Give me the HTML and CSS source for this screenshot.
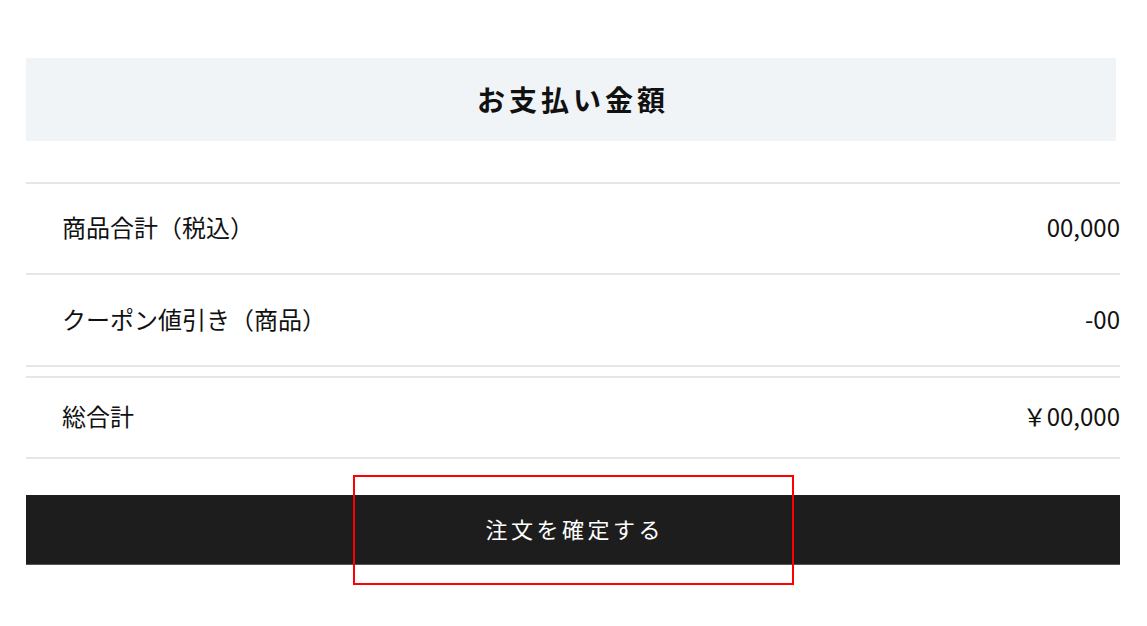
FILE: index.html
```html
<!DOCTYPE html>
<html lang="ja">
<head>
    <meta charset="UTF-8">
    <meta name="viewport" content="width=device-width, initial-scale=1.0">
    <title>お支払い金額</title>
    <link rel="stylesheet" href="styles.css">
</head>
<body>

    <div class="payment">
        <h2 class="payment-title">お支払い金額</h2>

        <div class="price-list">
            <div class="price-row first">
                <span class="label">商品合計（税込）</span>
                <span class="value">00,000</span>
            </div>
            <div class="price-row">
                <span class="label">クーポン値引き（商品）</span>
                <span class="value">-00</span>
            </div>
        </div>

        <div class="price-row total">
            <span class="label">総合計</span>
            <span class="value">￥00,000</span>
        </div>

        <div class="order">
            <button class="order-btn">注文を確定する</button>
            <div class="highlight"></div>
        </div>
    </div>

</body>
</html>
```

FILE: styles.css
```css
body {
    font-family: "Noto Sans CJK JP", "Noto Sans", sans-serif;
    background-color: #fff;
    color: #111;
    margin: 0;
    padding: 0;
}
.payment {
    width: 1094px;
    padding: 58px 0 60px 26px;
}
.payment-title {
    margin: 0 4px 0 0;
    height: 83px;
    line-height: 83px;
    background-color: #f0f4f7;
    text-align: center;
    font-size: 28px;
    font-weight: bold;
    letter-spacing: 4px;
    text-indent: 4px;
}
.price-list {
    margin-top: 41px;
}
.price-row {
    display: flex;
    justify-content: space-between;
    align-items: center;
    box-sizing: border-box;
    height: 92px;
    padding: 0 0 4px 36px;
    border-bottom: 2px solid #e6e6e6;
    font-size: 24px;
}
.price-row.first {
    border-top: 2px solid #e6e6e6;
    height: 93px;
}
.price-row.total {
    margin-top: 9px;
    height: 83px;
    border-top: 2px solid #e6e6e6;
}
.order {
    position: relative;
    margin-top: 36px;
}
.order-btn {
    display: block;
    width: 100%;
    height: 70px;
    padding-bottom: 5px;
    background-color: #1d1d1d;
    color: #fff;
    border: none;
    border-bottom: 1px solid #555;
    font-family: "Noto Sans CJK JP", sans-serif;
    font-size: 22px;
    letter-spacing: 3.5px;
    text-indent: 3.5px;
}
.highlight {
    position: absolute;
    left: 327px;
    top: -20px;
    width: 437px;
    height: 106px;
    border: 2px solid #f00;
}
```
